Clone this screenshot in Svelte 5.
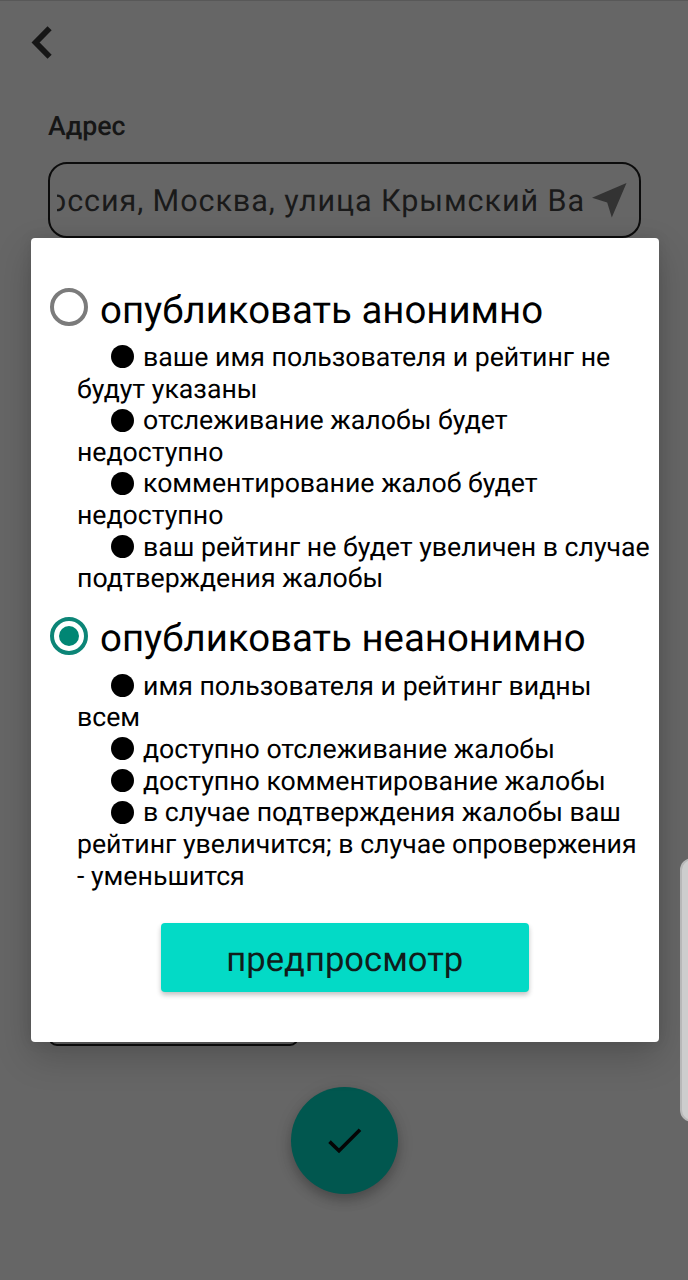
<script>
  const choices = [
    {
      title: 'опубликовать анонимно',
      checked: false,
      notes: [
        ['ваше имя пользователя и рейтинг не', 'будут указаны'],
        ['отслеживание жалобы будет', 'недоступно'],
        ['комментирование жалоб будет', 'недоступно'],
        ['ваш рейтинг не будет увеличен в случае', 'подтверждения жалобы']
      ]
    },
    {
      title: 'опубликовать неанонимно',
      checked: true,
      notes: [
        ['имя пользователя и рейтинг видны', 'всем'],
        ['доступно отслеживание жалобы'],
        ['доступно комментирование жалобы'],
        ['в случае подтверждения жалобы ваш', 'рейтинг увеличится; в случае опровержения', '- уменьшится']
      ]
    }
  ];
</script>

<div class="screen">
  <div class="page">
    <svg class="back" width="22" height="34" viewBox="0 0 22 34"><path d="M18.6 2.3 4.6 16.5 18.6 30.7" fill="none" stroke="#161616" stroke-width="5.8" /></svg>
    <div class="label">Адрес</div>
    <div class="address">
      <div class="clip"><span>оссия, Москва, улица Крымский Ва</span></div>
      <svg width="36" height="36" viewBox="0 0 36 36"><path d="M34.5 1 19.8 35.5 15.2 20.6 0 15.8Z" fill="#333" /></svg>
    </div>
    <div class="field"></div>
    <div class="fab">
      <svg width="34" height="26" viewBox="0 0 34 26"><path d="M1.5 13.6 11 22.8 32 1.7" fill="none" stroke="#050505" stroke-width="3.6" /></svg>
    </div>
  </div>

  <div class="dialog">
    {#each choices as choice}
      <section>
        <div class="choice">
          <span class="radio" class:on={choice.checked}></span>
          <span class="title">{choice.title}</span>
        </div>
        <div class="notes">
          {#each choice.notes as note}
            {#each note as line, i}
              <div class="line" class:first={i === 0}>{#if i === 0}<i></i>{/if}<span>{line}</span></div>
            {/each}
          {/each}
        </div>
      </section>
    {/each}
    <button>предпросмотр</button>
  </div>

  <div class="edge"></div>
</div>

<style>
  :global(body) { margin: 0; }
  .screen {
    position: relative;
    width: 688px;
    height: 1280px;
    overflow: hidden;
    background: #666;
    font-family: Roboto, sans-serif;
    text-rendering: geometricPrecision;
    color: #000;
  }
  .page {
    box-sizing: border-box;
    height: 1280px;
    display: flex;
    flex-direction: column;
    padding: 25px 47px 0 48px;
    border-top: 1px solid #585858;
  }
  .back { margin-left: -17px; flex: none; }
  .label {
    margin-top: 50px;
    height: 32px;
    line-height: 32px;
    font-size: 26.75px;
    font-weight: 500;
    color: #161616;
  }
  .address {
    box-sizing: border-box;
    flex: none;
    height: 76px;
    margin-top: 19.5px;
    border: 2px solid #0c0c0c;
    border-radius: 19px;
    display: flex;
    align-items: center;
    padding: 0 12px 0 7px;
  }
  .clip {
    width: 528px;
    margin-right: 7px;
    overflow: hidden;
    display: flex;
    justify-content: flex-end;
    font-size: 30.58px;
    line-height: 40px;
    letter-spacing: 0.9px;
    white-space: nowrap;
    color: #1a1a1a;
    flex: none;
    padding-top: 4px;
  }
  .address svg { flex: none; }
  .field {
    box-sizing: border-box;
    flex: none;
    width: 251px;
    height: 76px;
    margin-top: 732.5px;
    border: 2px solid #0c0c0c;
    border-radius: 9px;
  }
  .fab {
    flex: none;
    align-self: center;
    width: 107px;
    height: 107px;
    margin-top: 41px;
    border-radius: 50%;
    background: #01574f;
    display: flex;
    align-items: center;
    justify-content: center;
    box-shadow: 0 6px 12px rgba(0, 0, 0, 0.22), 0 3px 18px rgba(0, 0, 0, 0.1);
  }
  .dialog {
    position: absolute;
    box-sizing: border-box;
    left: 30.6px;
    top: 238px;
    width: 628.4px;
    height: 804px;
    padding-top: 46px;
    background: #fff;
    border-radius: 4px;
    box-shadow: 0 14px 36px rgba(0, 0, 0, 0.2), 0 0 14px rgba(0, 0, 0, 0.09);
    display: flex;
    flex-direction: column;
  }
  section { margin-bottom: 18px; }
  .choice { display: flex; align-items: center; height: 48px; padding-left: 19.4px; }
  .radio {
    box-sizing: border-box;
    width: 38px;
    height: 38px;
    border: 4px solid #7b7b7b;
    border-radius: 50%;
    margin: 0 12px 2px 0;
    display: grid;
    place-items: center;
  }
  .radio.on { border-color: #0c8577; }
  .radio.on::after { content: ''; width: 20px; height: 20px; border-radius: 50%; background: #018674; }
  .title { font-size: 38.4px; line-height: 48px; padding-top: 5px; white-space: nowrap; }
  .notes { padding: 10px 0 0 46.4px; }
  .line {
    height: 31.62px;
    line-height: 31.62px;
    font-size: 26.68px;
    white-space: nowrap;
    display: flex;
  }
  .first { padding-left: 34px; }
  i { flex: none; width: 23px; height: 23px; margin: 3.3px 9px 0 0; border-radius: 50%; background: #000; }
  button {
    align-self: center;
    flex: none;
    width: 368px;
    height: 69px;
    margin: 13.2px 0 0 0;
    padding: 4px 0 0;
    border: 0;
    border-radius: 4px;
    background: #03dac6;
    box-shadow: 0 3px 5px rgba(0, 0, 0, 0.24);
    font: 400 34.6px/40px Roboto, sans-serif;
    text-rendering: geometricPrecision;
    color: #101d1b;
  }
  .edge {
    position: absolute;
    left: 680px;
    top: 858px;
    width: 24px;
    height: 264px;
    box-sizing: border-box;
    border: 2px solid #b8b8b8;
    border-radius: 12px;
    background: #cdcdcd;
  }
</style>
